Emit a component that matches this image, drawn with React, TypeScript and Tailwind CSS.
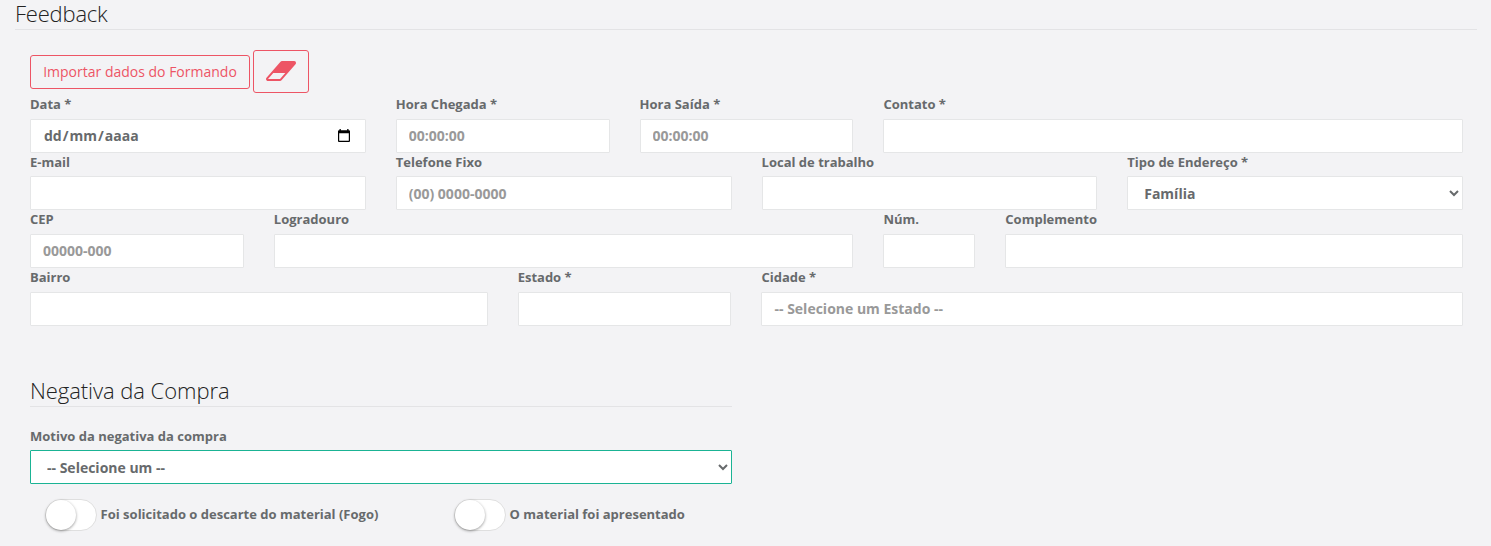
import type { ReactNode } from 'react';

const control =
  'block h-[34px] w-full rounded-[1px] border border-[#e5e6e7] bg-white px-3 py-1.5 text-[14px] font-bold leading-5 text-[#676a6c] outline-none placeholder:text-[#999]';

function Field({ label, span, children }: { label: string; span: string; children?: ReactNode }) {
  return (
    <label className={`block min-w-0 ${span}`}>
      <span className="mb-[5px] block h-[18.57px] whitespace-nowrap text-[13px] font-bold leading-[18.57px]">{label}</span>
      {children ?? <input className={control} />}
    </label>
  );
}

function EraserIcon() {
  return (
    <svg width="30" height="28" viewBox="0 0 1920 1792" fill="currentColor">
      <path d="M896 1408l336-384h-768l-336 384h768zm1013-1077q15 34 9.5 71.5t-30.5 65.5l-896 1024q-38 44-96 44h-768q-38 0-69.5-20.5t-47.5-54.5q-15-34-9.5-71.5t30.5-65.5l896-1024q38-44 96-44h768q38 0 69.5 20.5t47.5 54.5z" />
    </svg>
  );
}

function CalendarIcon() {
  return (
    <svg width="12" height="14" viewBox="0 0 12 14" className="mr-[3px]">
      <path fill="#000" fillRule="evenodd" d="M1.5 0h1.3v1.2h6.4V0h1.3v1.2H11a1 1 0 0 1 1 1V12a1 1 0 0 1-1 1H1a1 1 0 0 1-1-1V2.200a1 1 0 0 1 1-1h.5zM1.200 4.300v7.500h9.600V4.300z" />
    </svg>
  );
}

function Toggle({ label }: { label: string }) {
  return (
    <div className="flex items-start gap-[3.6px]">
      <button
        type="button"
        role="switch"
        aria-checked="false"
        className="flex h-8 w-[52px] shrink-0 rounded-[20px] border border-[#dfdfdf] bg-white"
      >
        <span className="block size-[30px] rounded-full bg-white shadow-[0_1px_3px_rgba(0,0,0,0.4)]" />
      </button>
      <span className="mt-1.5 whitespace-nowrap text-[13px] font-bold leading-[18px]">{label}</span>
    </div>
  );
}

export default function App() {
  return (
    <main className="h-[546px] overflow-hidden bg-[#f3f3f5] pl-[15px] pr-[14px] font-['Open_Sans',sans-serif] text-[#676a6c]">
      <h2 className="h-[30px] border-b border-[#e3e3e5] text-[22px] font-light leading-[26px] tracking-[-0.2px] text-[#222]">Feedback</h2>

      <div className="pl-[15px] pr-[14px]">
        <div className="flex items-start gap-[3px] pt-5">
          <button type="button" className="mt-[5px] h-[34px] w-[220px] whitespace-nowrap rounded-[3px] border border-[#ed5565] text-[14px] leading-5 text-[#ed5565]">
            Importar dados do Formando
          </button>
          <button type="button" aria-label="Limpar" className="flex h-[43px] w-14 rounded-[3px] border border-[#ed5565] px-3 py-1.5 text-[#ed5565]">
            <EraserIcon />
          </button>
        </div>

        <form className="mt-[2.3px] grid grid-cols-12 gap-x-[30px]">
          <Field label="Data *" span="col-span-3">
            <span className={`${control} flex! items-center justify-between`}>
              <span className="flex gap-px pl-px">
                <span>dd</span>
                <span>/</span>
                <span>mm</span>
                <span>/</span>
                <span>aaaa</span>
              </span>
              <CalendarIcon />
            </span>
          </Field>
          <Field label="Hora Chegada *" span="col-span-2">
            <input className={control} placeholder="00:00:00" />
          </Field>
          <Field label="Hora Saída *" span="col-span-2">
            <input className={control} placeholder="00:00:00" />
          </Field>
          <Field label="Contato *" span="col-span-5" />

          <Field label="E-mail" span="col-span-3" />
          <Field label="Telefone Fixo" span="col-span-3 mr-[-0.1px]">
            <input className={control} placeholder="(00) 0000-0000" />
          </Field>
          <Field label="Local de trabalho" span="col-span-3 ml-[0.1px]" />
          <Field label="Tipo de Endereço *" span="col-span-3">
            <select className={control}>
              <option>Família</option>
            </select>
          </Field>

          <Field label="CEP" span="col-span-2">
            <input className={control} placeholder="00000-000" />
          </Field>
          <Field label="Logradouro" span="col-span-5" />
          <Field label="Núm." span="col-span-1" />
          <Field label="Complemento" span="col-span-4" />

          <Field label="Bairro" span="col-span-4" />
          <Field label="Estado *" span="col-span-2" />
          <Field label="Cidade *" span="col-span-6">
            <input className={control} placeholder="-- Selecione um Estado --" />
          </Field>
        </form>

        <section className="w-[702px] pt-[51px]">
          <h2 className="h-[30px] border-b border-[#e3e3e5] text-[22px] font-light leading-[27px] tracking-[-0.06px] text-[#222]">Negativa da Compra</h2>
          <div className="pt-5">
            <Field label="Motivo da negativa da compra" span="">
              <select className={`${control} border-[#1ab394]!`}>
                <option>-- Selecione um --</option>
              </select>
            </Field>
          </div>
          <div className="grid grid-cols-[409px_1fr] pl-[15px] pt-[15px]">
            <Toggle label="Foi solicitado o descarte do material (Fogo)" />
            <Toggle label="O material foi apresentado" />
          </div>
        </section>
      </div>
    </main>
  );
}
